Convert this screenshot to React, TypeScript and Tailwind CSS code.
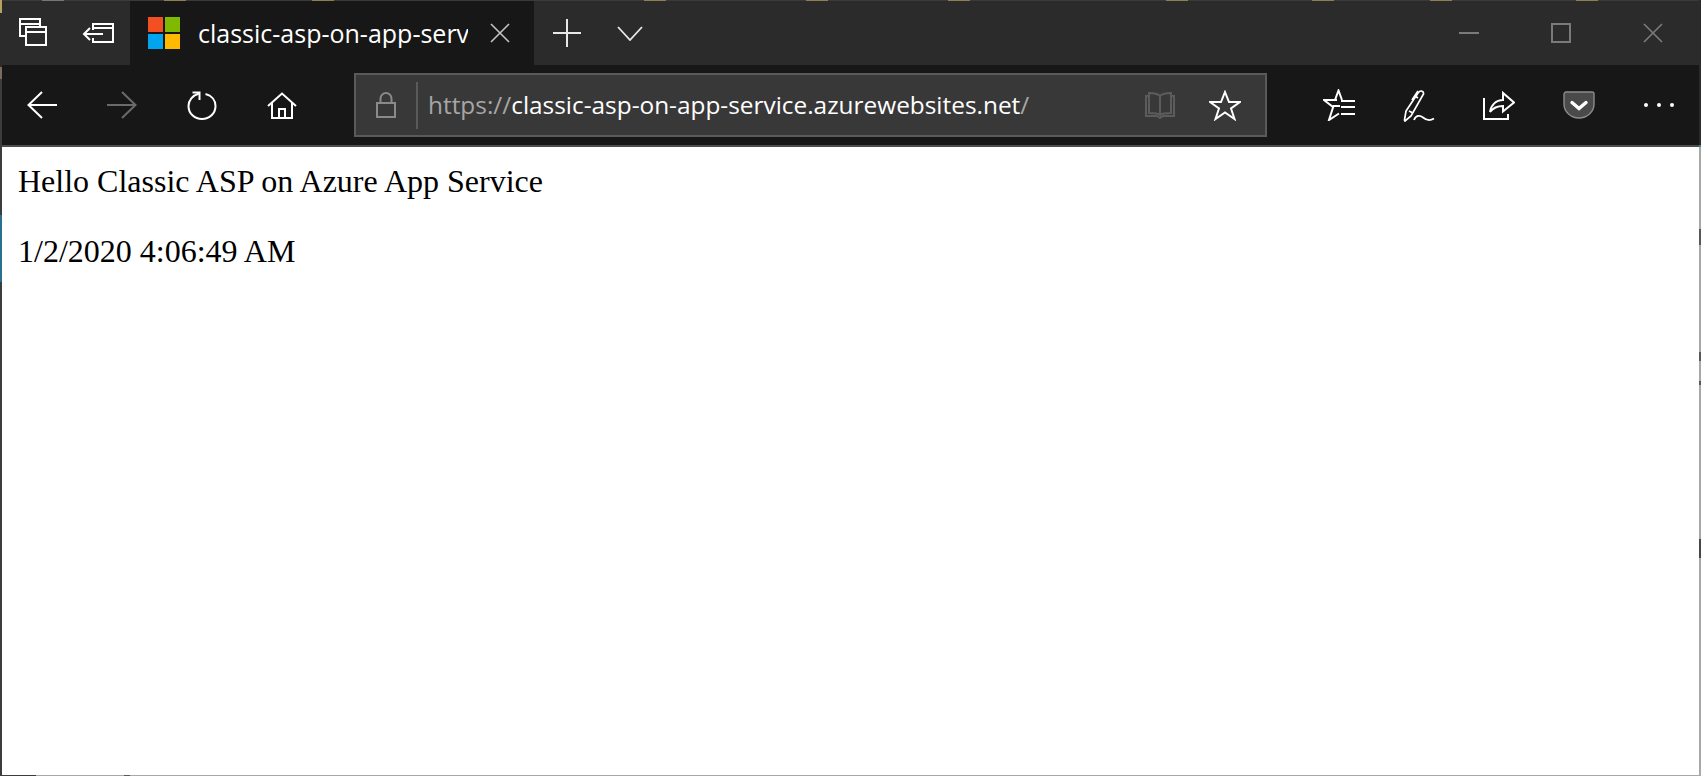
import type { ReactNode } from "react";

const uiFont = { fontFamily: "'Open Sans', 'Noto Sans', sans-serif" };

function TopStrip() {
  return (
    <div className="flex h-px w-full shrink-0 bg-[#3a3a3a]">
      <span className="ml-[40px] w-[22px] bg-[#77776f]" />
      <span className="ml-[100px] w-[22px] bg-[#8f7f4f]" />
      <span className="ml-[126px] w-[22px] bg-[#8f7f4f]" />
      <span className="ml-[310px] w-[22px] bg-[#8f7f4f]" />
      <span className="ml-[140px] w-[22px] bg-[#8f7f4f]" />
      <span className="ml-[120px] w-[22px] bg-[#8f7f4f]" />
      <span className="ml-[196px] w-[22px] bg-[#8f7f4f]" />
      <span className="ml-[124px] w-[22px] bg-[#8f7f4f]" />
      <span className="ml-[96px] w-[22px] bg-[#8f7f4f]" />
      <span className="ml-[124px] w-[22px] bg-[#8f7f4f]" />
    </div>
  );
}

function IconButton({ className, children }: { className: string; children: ReactNode }) {
  return <div className={`flex h-full shrink-0 items-center justify-center ${className}`}>{children}</div>;
}

function MsLogo() {
  return (
    <div className="grid h-[32px] w-[32px] shrink-0 grid-cols-2 gap-[2px]">
      <span className="bg-[#f25022]" />
      <span className="bg-[#7fba00]" />
      <span className="bg-[#00a4ef]" />
      <span className="bg-[#ffb900]" />
    </div>
  );
}

function TabBar() {
  return (
    <div className="flex h-[64px] shrink-0 items-stretch bg-[#2b2b2b]">
      <IconButton className="w-[64px]">
        <svg width="30" height="30" viewBox="20 19 30 30" fill="none" stroke="#fff" strokeWidth="2">
          <path d="M26 37H21V20H41V27M21 25H41" />
          <path d="M27 28H47V46H27ZM27 33H47" />
        </svg>
      </IconButton>
      <IconButton className="w-[64px]">
        <svg width="34" height="22" viewBox="81 22 34 22" fill="none" stroke="#fff" strokeWidth="2">
          <path d="M93 30V24H113V42H93V38M93 28H113" />
          <path d="M103 34H84M90 28L84 34L90 40" />
        </svg>
      </IconButton>
      <div className="flex w-[404px] shrink-0 items-center bg-[#171717] pl-[18px]" style={uiFont}>
        <MsLogo />
        <div className="ml-[18px] w-[270px] shrink-0 overflow-hidden whitespace-nowrap text-[25px] leading-[30px] text-white">
          classic-asp-on-app-service.azurewebsites.net
        </div>
        <svg className="ml-[22px]" width="20" height="20" viewBox="0 0 20 20" fill="none" stroke="#c4c4c4" strokeWidth="1.6">
          <path d="M1 1L19 19M19 1L1 19" />
        </svg>
      </div>
      <IconButton className="w-[66px]">
        <svg width="28" height="28" viewBox="0 0 28 28" fill="none" stroke="#e8e8e8" strokeWidth="2">
          <path d="M0 14H28M14 0V28" />
        </svg>
      </IconButton>
      <IconButton className="w-[60px]">
        <svg width="26" height="15" viewBox="0 0 26 15" fill="none" stroke="#e8e8e8" strokeWidth="1.8">
          <path d="M1 1L13 14L25 1" />
        </svg>
      </IconButton>
      <div className="flex-1" />
      <IconButton className="w-[92px]">
        <div className="h-[2px] w-[20px] bg-[#7a7a7a]" />
      </IconButton>
      <IconButton className="w-[92px]">
        <div className="h-[20px] w-[20px] border-2 border-[#7a7a7a]" />
      </IconButton>
      <IconButton className="w-[92px]">
        <svg width="20" height="20" viewBox="0 0 20 20" fill="none" stroke="#7a7a7a" strokeWidth="1.7">
          <path d="M1 1L19 19M19 1L1 19" />
        </svg>
      </IconButton>
    </div>
  );
}

function AddressBar() {
  return (
    <div className="ml-[32px] flex h-[64px] w-[913px] shrink-0 items-center border-2 border-[#5a5a5a] bg-[#383838]">
      <div className="flex h-full w-[60px] shrink-0 items-center justify-center">
        <svg width="20" height="26" viewBox="0 0 20 26" fill="none" stroke="#8a8a8a" strokeWidth="2">
          <path d="M1 11H19V25H1ZM4.5 11V6.5C4.5 3.5 7 1 10 1C13 1 15.5 3.5 15.5 6.5V11" />
        </svg>
      </div>
      <div className="h-[47px] w-[2px] shrink-0 bg-[#5a5a5a]" />
      <div className="ml-[10px] flex-1 whitespace-nowrap text-[24.4px] leading-[30px] text-white" style={uiFont}>
        <span className="text-[#a6a6a6]">https://</span>
        classic-asp-on-app-service.azurewebsites.net
        <span className="text-[#a6a6a6]">/</span>
      </div>
      <IconButton className="w-[50px]">
        <svg width="30" height="27" viewBox="0 0 30 27" fill="none" stroke="#5c5c5c" strokeWidth="2">
          <path d="M3 4H1V24H12L15 26L18 24H29V4H27" />
          <path d="M15 23V4C13 2 8 1 4 1V21C8 21 13 21 15 23ZM15 4C17 2 22 1 26 1V21C22 21 17 21 15 23" />
        </svg>
      </IconButton>
      <IconButton className="w-[80px]">
        <svg width="32" height="31" viewBox="0 0 32 31" fill="none" stroke="#fff" strokeWidth="2">
          <path d="M16 2L20 12H31L22 18.5L25.5 29L16 22.5L6.5 29L10 18.5L1 12H12Z" />
        </svg>
      </IconButton>
    </div>
  );
}

function Toolbar() {
  return (
    <div className="flex h-[80px] shrink-0 items-center bg-[#171717]">
      <IconButton className="w-[80px]">
        <svg width="30" height="28" viewBox="0 0 30 28" fill="none" stroke="#fff" strokeWidth="2">
          <path d="M30 14H2M15 1L1.5 14L15 27" />
        </svg>
      </IconButton>
      <IconButton className="w-[80px]">
        <svg width="30" height="28" viewBox="0 0 30 28" fill="none" stroke="#6a6a6a" strokeWidth="2">
          <path d="M0 14H28M15 1L28.5 14L15 27" />
        </svg>
      </IconButton>
      <IconButton className="w-[80px]">
        <svg width="30" height="29" viewBox="0 0 30 29" fill="none" stroke="#fff" strokeWidth="2">
          <path d="M18.5 3C24.5 4.5 28.5 9 28.5 15C28.5 22.5 22.5 28 15 28C7.5 28 1.5 22.5 1.5 15C1.5 9.5 5.5 4.5 12 2.5" />
          <path d="M5.5 1.5H12.5V9" />
        </svg>
      </IconButton>
      <IconButton className="w-[80px]">
        <svg width="30" height="27" viewBox="0 0 30 27" fill="none" stroke="#fff" strokeWidth="2">
          <path d="M1 14L15 1.5L29 14M5 10.5V26H12V17H18V26H25V10.5M5 26H25" />
        </svg>
      </IconButton>
      <AddressBar />
      <div className="ml-[32px] flex h-full">
        <IconButton className="w-[80px]">
          <svg width="32" height="32" viewBox="0 0 32 32" fill="none" stroke="#fff" strokeWidth="2">
            <path d="M17 17H10.5L6 31L16 24.5M14 11H1L10 18M12 11L15.5 1.5L19 11" />
            <path d="M18 12H32M18 18H32M18 25H32" />
          </svg>
        </IconButton>
        <IconButton className="w-[80px]">
          <svg width="32" height="33" viewBox="0 0 32 33" fill="none" stroke="#fff" strokeWidth="1.7">
            <path d="M1.5 31L3 22L15 4C17 1 21 1.5 20.5 5L8 27L2 32Z" />
            <path d="M6 22L10 24M9 11L15 2M12 7L15 9" />
            <path d="M11 31C13 26 17 26 20 28.5C23 31 27 32 31 29.5" />
          </svg>
        </IconButton>
        <IconButton className="w-[80px]">
          <svg width="32" height="30" viewBox="0 0 32 30" fill="none" stroke="#fff" strokeWidth="2">
            <path d="M1 8V29H25V24M1 29H25" />
            <path d="M7 22C8 15 13 10 20 10V3L31 12.5L20 21.5V16C15 16 10 18 7 22Z" />
          </svg>
        </IconButton>
        <IconButton className="w-[80px]">
          <svg width="32" height="28" viewBox="0 0 32 28">
            <path
              d="M3 1H29C30 1 31 2 31 3V13C31 21 24 27 16 27C8 27 1 21 1 13V3C1 2 2 1 3 1Z"
              fill="#4a4a4a"
              stroke="#8c8c8c"
              strokeWidth="1.4"
            />
            <path d="M9 11.5L16 17.5L23 11.5" fill="none" stroke="#fff" strokeWidth="3.4" strokeLinecap="round" />
          </svg>
        </IconButton>
        <IconButton className="w-[80px]">
          <div className="flex gap-[9px]">
            <span className="h-[4px] w-[4px] rounded-full bg-white" />
            <span className="h-[4px] w-[4px] rounded-full bg-white" />
            <span className="h-[4px] w-[4px] rounded-full bg-white" />
          </div>
        </IconButton>
      </div>
    </div>
  );
}

function LeftEdge() {
  return (
    <div className="flex w-[2px] shrink-0 flex-col bg-[#3a3c40]">
      <div className="h-[13px] bg-[#b5a35f]" />
      <div className="h-[54px] bg-[#2b2b2b]" />
      <div className="h-[12px] bg-[#7c6a5a]" />
      <div className="h-[136px]" />
      <div className="h-[67px] bg-[#2b6f8f]" />
    </div>
  );
}

function RightEdge() {
  return (
    <div className="flex w-[2px] shrink-0 flex-col bg-[#a8a8a8]">
      <div className="h-[145px] bg-[#2b2b2b]" />
      <div className="h-[2px] bg-[#3f7f91]" />
      <div className="mt-[82px] h-[16px] bg-[#55585e]" />
      <div className="mt-[107px] h-[9px] bg-[#55585e]" />
      <div className="mt-[20px] h-[4px] bg-[#55585e]" />
      <div className="mt-[154px] h-[19px] bg-[#44464b]" />
    </div>
  );
}

export default function App() {
  return (
    <div className="flex h-[776px] w-[1701px] overflow-hidden bg-white">
      <LeftEdge />
      <div className="flex min-w-0 flex-1 flex-col">
        <TopStrip />
        <TabBar />
        <Toolbar />
        <div className="h-[2px] shrink-0 bg-[#4d4d4d]" />
        <main className="flex-1 px-[16px] pt-[16px] text-[32px] leading-[37px] text-black" style={{ fontFamily: "'Liberation Serif', serif" }}>
          <p>Hello Classic ASP on Azure App Service</p>
          <p className="mt-[33px]">1/2/2020 4:06:49 AM</p>
        </main>
        <div className="flex h-px shrink-0 bg-[#a8a8a8]">
          <span className="w-[34px] bg-[#3a3c40]" />
          <span className="ml-[88px] w-[6px] bg-[#55585e]" />
        </div>
      </div>
      <RightEdge />
    </div>
  );
}
